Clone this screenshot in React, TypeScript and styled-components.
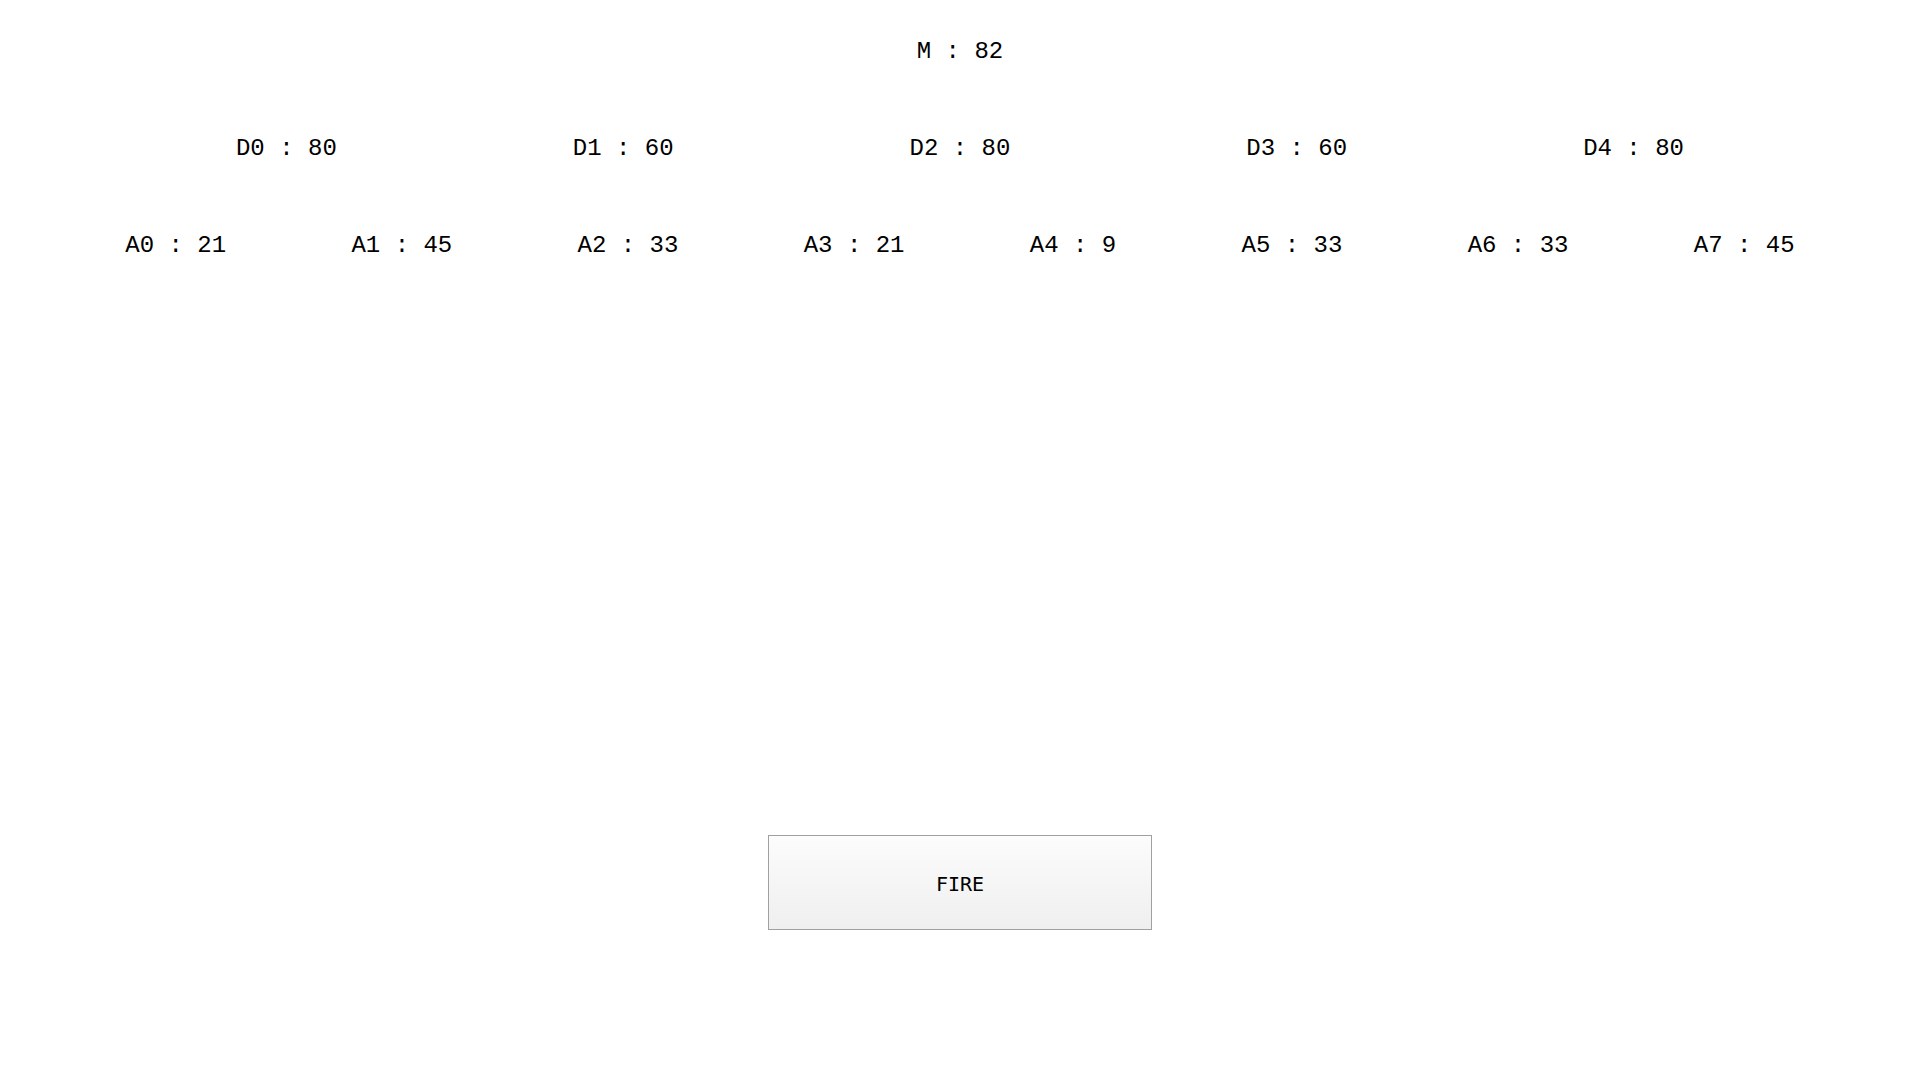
import React from 'react'
import { createGlobalStyle, styled } from 'styled-components'

const GlobalStyle = createGlobalStyle`
  html, body {
    margin: 0;
    padding: 0;
    background: #ffffff;
  }
  body {
    font-family: "Liberation Mono", "DejaVu Sans Mono", monospace;
    color: #000000;
  }
`

const Page = styled.div`
  display: flex;
  flex-direction: column;
  align-items: stretch;
  padding-top: 38px;
  width: 100%;
  min-height: 1079px;
  box-sizing: border-box;
`

const Row = styled.div`
  display: flex;
  justify-content: space-evenly;
  align-items: center;
  height: 28px;
  & + & {
    margin-top: 69px;
  }
`

const Reading = styled.div`
  font-family: "Liberation Mono", "DejaVu Sans Mono", monospace;
  font-size: 24px;
  line-height: 28px;
  white-space: pre;
  color: #000;
`

const Actions = styled.div`
  display: flex;
  justify-content: center;
  margin-top: 575px;
`

const FireButton = styled.button`
  width: 384px;
  height: 95px;
  box-sizing: border-box;
  border: 1px solid #a0a0a0;
  border-radius: 0;
  background: linear-gradient(to bottom, #fcfcfc 0%, #efefef 100%);
  font-family: "DejaVu Sans Mono", monospace;
  font-size: 20px;
  color: #000;
  cursor: pointer;
  padding: 2px 0 0;
`

const motor = 82
const drivers = [80, 60, 80, 60, 80]
const arms = [21, 45, 33, 21, 9, 33, 33, 45]

export default function App() {
  return (
    <>
      <GlobalStyle />
      <Page>
        <Row>
          <Reading>{`M : ${motor}`}</Reading>
        </Row>
        <Row>
          {drivers.map((v, i) => (
            <Reading key={'d' + i}>{`D${i} : ${v}`}</Reading>
          ))}
        </Row>
        <Row>
          {arms.map((v, i) => (
            <Reading key={'a' + i}>{`A${i} : ${v}`}</Reading>
          ))}
        </Row>
        <Actions>
          <FireButton>FIRE</FireButton>
        </Actions>
      </Page>
    </>
  )
}
